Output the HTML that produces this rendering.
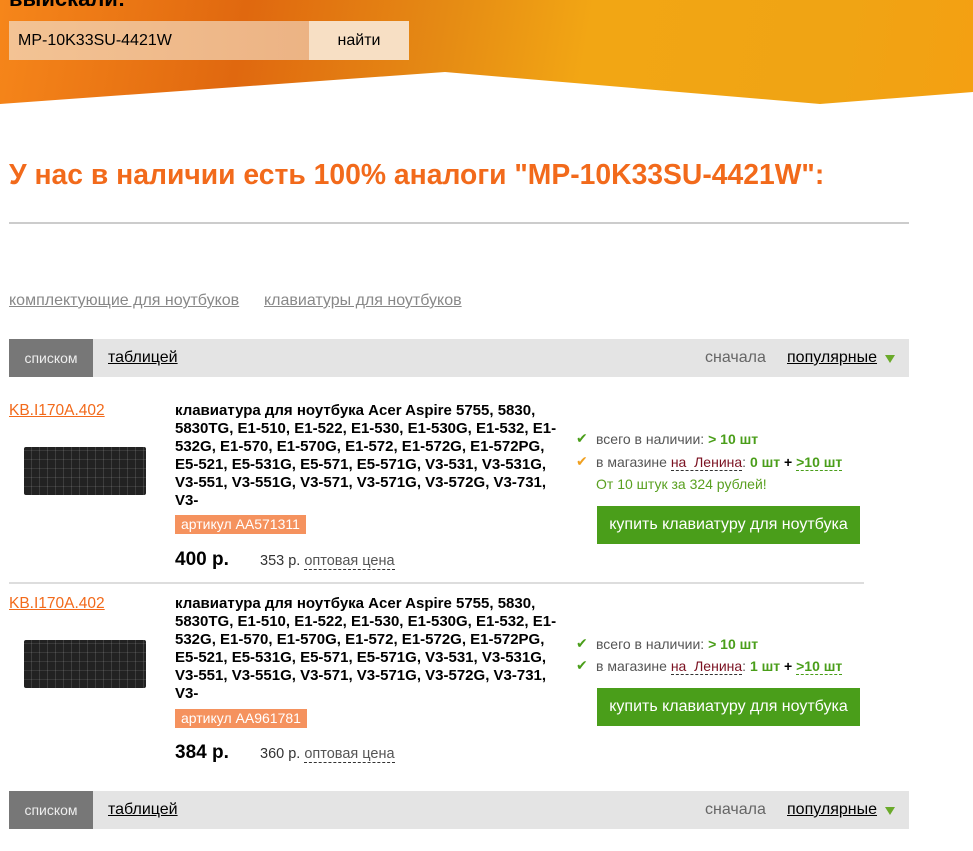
<!DOCTYPE html>
<html><head><meta charset="utf-8"><style>
*{margin:0;padding:0;box-sizing:border-box}
body{width:973px;height:851px;overflow:hidden;background:#fff;font-family:"Liberation Sans","DejaVu Sans",sans-serif;position:relative;color:#000}
.a{position:absolute;white-space:nowrap}
.hdr{position:absolute;left:0;top:0;width:973px;height:105px;background:linear-gradient(100deg,#f6861a 0%,#e0680f 25%,#e58a14 45%,#f2a614 60%,#f0a414 85%,#f4a012 100%)}
.bar{position:absolute;left:9px;width:900px;height:38px;background:#e4e4e4;font-size:16px}
.bar .s{position:absolute;left:0;top:0;width:84px;height:38px;background:#777;color:#eee;font-size:14px;line-height:38px;text-align:center}
.bar .t{position:absolute;left:99px;top:10px;text-decoration:underline}
.bar .n{position:absolute;left:696px;top:10px;color:#666}
.bar .p{position:absolute;left:778px;top:10px;text-decoration:underline}
.bar .tr{position:absolute;left:876px;top:16px;width:0;height:0;border-left:5px solid transparent;border-right:5px solid transparent;border-top:8px solid #6aaa2a}
.code{color:#f26a1b;font-size:15.5px;text-decoration:underline}
.title{position:absolute;left:175px;width:395px;font-size:15px;font-weight:bold;line-height:18px;white-space:normal}
.art{position:absolute;left:175px;height:19px;background:#f5925e;color:#fff;font-size:14px;line-height:19px;padding:0 6px}
.price{font-size:19px;font-weight:bold}
.opt{font-size:14.5px;color:#333}
.opt span{color:#555;border-bottom:1px dashed #333}
.st{font-size:14px;color:#555}
.g{color:#4a9e1a;font-weight:bold}
.btn{position:absolute;left:597px;width:263px;height:38px;background:#4a9e1a;color:#fff;font-size:16px;line-height:38px;text-align:center}
.kb{position:absolute;left:24px;width:122px;height:48px;background:#222;border-radius:2px;background-image:repeating-linear-gradient(90deg,transparent 0 7px,rgba(255,255,255,.12) 7px 8px),repeating-linear-gradient(0deg,transparent 0 8px,rgba(255,255,255,.1) 8px 9px)}
.ck{position:absolute;font-size:14px;font-weight:bold}
</style></head><body>
<div class="hdr"></div>
<svg class="a" style="left:0;top:0" width="973" height="110"><polygon points="0,104 445,72 820,104 973,92 973,110 0,110" fill="#fff"/></svg>
<div class="a" style="left:9px;top:-14px;font-size:22px;font-weight:bold">выискали:</div>
<div class="a" style="left:9px;top:21px;width:300px;height:39px;background:linear-gradient(90deg,#f3c394,#ecb384);font-size:16px;line-height:39px;padding-left:9px">MP-10K33SU-4421W</div>
<div class="a" style="left:309px;top:21px;width:100px;height:39px;background:#f7dfc4;font-size:16px;line-height:39px;text-align:center">найти</div>

<div class="a" style="left:9px;top:158px;font-size:28.3px;font-weight:bold;color:#f26a1b">У нас в наличии есть 100% аналоги "MP-10K33SU-4421W":</div>
<div class="a" style="left:9px;top:222px;width:900px;height:2px;background:#ccc"></div>
<div class="a" style="left:9px;top:292px;font-size:16px;color:#888;text-decoration:underline">комплектующие для ноутбуков</div>
<div class="a" style="left:264px;top:292px;font-size:16px;color:#888;text-decoration:underline">клавиатуры для ноутбуков</div>

<div class="bar" style="top:339px"><div class="s">списком</div><div class="t">таблицей</div><div class="n">сначала</div><div class="p">популярные</div><div class="tr"></div></div>

<!-- product 1 -->
<div class="a code" style="left:9px;top:402px">KB.I170A.402</div>
<div class="kb" style="top:447px"></div>
<div class="title" style="top:402px">клавиатура для ноутбука Acer Aspire 5755, 5830, 5830TG, E1-510, E1-522, E1-530, E1-530G, E1-532, E1-532G, E1-570, E1-570G, E1-572, E1-572G, E1-572PG, E5-521, E5-531G, E5-571, E5-571G, V3-531, V3-531G, V3-551, V3-551G, V3-571, V3-571G, V3-572G, V3-731, V3-</div>
<div class="art" style="top:515px">артикул AA571311</div>
<div class="a price" style="left:175px;top:549px">400 р.</div>
<div class="a opt" style="left:260px;top:553px">353 р. <span>оптовая цена</span></div>
<div class="ck a" style="left:576px;top:430px;color:#4a9e1a">✔</div>
<div class="a st" style="left:596px;top:431px">всего в наличии: <span class="g">&gt; 10 шт</span></div>
<div class="ck a" style="left:576px;top:453px;color:#f0a020">✔</div>
<div class="a st" style="left:596px;top:454px">в магазине <span style="color:#7a1020;border-bottom:1px dashed #333">на&nbsp; Ленина</span>: <span class="g">0 шт</span> <b style="color:#000">+</b> <span class="g" style="border-bottom:1px dashed #4a9e1a">&gt;10 шт</span></div>
<div class="a st" style="left:596px;top:476px;color:#5aa020">От 10 штук за 324 рублей!</div>
<div class="btn" style="top:506px">купить клавиатуру для ноутбука</div>
<div class="a" style="left:9px;top:582px;width:855px;height:2px;background:#ddd"></div>

<!-- product 2 -->
<div class="a code" style="left:9px;top:595px">KB.I170A.402</div>
<div class="kb" style="top:640px"></div>
<div class="title" style="top:595px">клавиатура для ноутбука Acer Aspire 5755, 5830, 5830TG, E1-510, E1-522, E1-530, E1-530G, E1-532, E1-532G, E1-570, E1-570G, E1-572, E1-572G, E1-572PG, E5-521, E5-531G, E5-571, E5-571G, V3-531, V3-531G, V3-551, V3-551G, V3-571, V3-571G, V3-572G, V3-731, V3-</div>
<div class="art" style="top:709px">артикул AA961781</div>
<div class="a price" style="left:175px;top:742px">384 р.</div>
<div class="a opt" style="left:260px;top:746px">360 р. <span>оптовая цена</span></div>
<div class="ck a" style="left:576px;top:635px;color:#4a9e1a">✔</div>
<div class="a st" style="left:596px;top:636px">всего в наличии: <span class="g">&gt; 10 шт</span></div>
<div class="ck a" style="left:576px;top:657px;color:#4a9e1a">✔</div>
<div class="a st" style="left:596px;top:658px">в магазине <span style="color:#7a1020;border-bottom:1px dashed #333">на&nbsp; Ленина</span>: <span class="g">1 шт</span> <b style="color:#000">+</b> <span class="g" style="border-bottom:1px dashed #4a9e1a">&gt;10 шт</span></div>
<div class="btn" style="top:688px">купить клавиатуру для ноутбука</div>

<div class="bar" style="top:791px"><div class="s">списком</div><div class="t">таблицей</div><div class="n">сначала</div><div class="p">популярные</div><div class="tr"></div></div>
</body></html>
